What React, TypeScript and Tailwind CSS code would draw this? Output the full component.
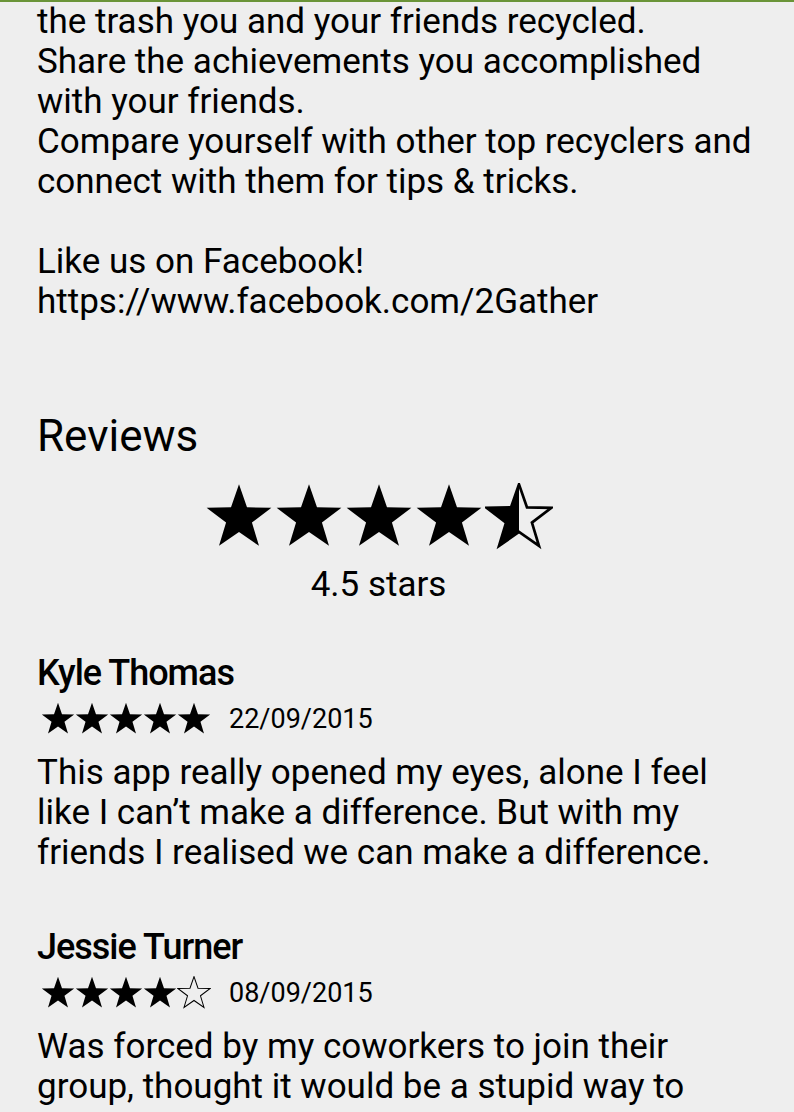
import React from 'react';

// regular five point star, viewBox 0 0 100 100
const starPoints = (() => {
  const pts: string[] = [];
  for (let i = 0; i < 10; i++) {
    const r = i % 2 === 0 ? 50 : 20;
    const a = (Math.PI / 5) * i - Math.PI / 2;
    pts.push(`${(50 + r * Math.cos(a)).toFixed(2)},${(52 + r * Math.sin(a)).toFixed(2)}`);
  }
  return pts.join(' ');
})();

type StarKind = 'full' | 'half' | 'empty';

const Star = ({ kind, size, id, stroke = 3 }: { kind: StarKind; size: number; id: string; stroke?: number }) => (
  <svg width={size} height={size} viewBox="0 0 100 100" className="shrink-0">
    {kind === 'full' && <polygon points={starPoints} fill="#000" />}
    {kind === 'empty' && (
      <polygon points={starPoints} fill="none" stroke="#000" strokeWidth={stroke} strokeLinejoin="miter" />
    )}
    {kind === 'half' && (
      <>
        <defs>
          <clipPath id={id}>
            <rect x="0" y="0" width="50" height="100" />
          </clipPath>
        </defs>
        <polygon points={starPoints} fill="none" stroke="#000" strokeWidth={stroke} strokeLinejoin="miter" />
        <polygon points={starPoints} fill="#000" clipPath={`url(#${id})`} />
      </>
    )}
  </svg>
);

const Stars = ({ kinds, size, gap, prefix, stroke }: { kinds: StarKind[]; size: number; gap: string; prefix: string; stroke?: number }) => (
  <div className={`flex items-center ${gap}`}>
    {kinds.map((k, i) => (
      <Star key={i} kind={k} size={size} id={`${prefix}-${i}`} stroke={stroke} />
    ))}
  </div>
);

const reviews = [
  {
    name: 'Kyle Thomas',
    stars: ['full', 'full', 'full', 'full', 'full'] as StarKind[],
    date: '22/09/2015',
    text: 'This app really opened my eyes, alone I feel like I can’t make a difference. But with my friends I realised we can make a difference.',
  },
  {
    name: 'Jessie Turner',
    stars: ['full', 'full', 'full', 'full', 'empty'] as StarKind[],
    date: '08/09/2015',
    text: 'Was forced by my coworkers to join their group, thought it would be a stupid way to',
  },
];

export default function App() {
  return (
    <div className="h-[1112px] w-[794px] overflow-hidden bg-[#eeeeee] border-t-2 border-[#6a9438] font-[Roboto,sans-serif] text-black">
      <div className="pl-[37px] w-[760px]">
        {/* description */}
        <div className="text-[35px] leading-[40px]">
          <p>the trash you and your friends recycled.</p>
          <p>Share the achievements you accomplished with your friends.</p>
          <p>Compare yourself with other top recyclers and connect with them for tips &amp; tricks.</p>
          <p className="h-[40px]"></p>
          <p>Like us on Facebook!</p>
          <p>https://www.facebook.com/2Gather</p>
        </div>

        {/* reviews */}
        <h2 className="mt-[90px] text-[44px] leading-[48px]">Reviews</h2>
        <div className="mt-[23px] w-[683px] flex flex-col items-center">
          <Stars kinds={['full', 'full', 'full', 'full', 'half']} size={68} gap="gap-[2px]" prefix="big" stroke={4} />
          <p className="mt-[14px] text-[35px] leading-[40px]">4.5 stars</p>
        </div>

        <div className="mt-[46px] flex flex-col gap-[52px]">
          {reviews.map((r, idx) => (
            <div key={r.name}>
              <p className="text-[36px] leading-[44px] font-medium tracking-[-1px]">{r.name}</p>
              <div className="mt-[6px] flex items-center gap-[18px] h-[36px] pl-[4px]">
                <Stars kinds={r.stars} size={34} gap="gap-0" prefix={`r${idx}`} stroke={3} />
                <span className="text-[27px] leading-[36px]">{r.date}</span>
              </div>
              <p className="mt-[16px] text-[35px] leading-[40px]">{r.text}</p>
            </div>
          ))}
        </div>
      </div>
    </div>
  );
}
